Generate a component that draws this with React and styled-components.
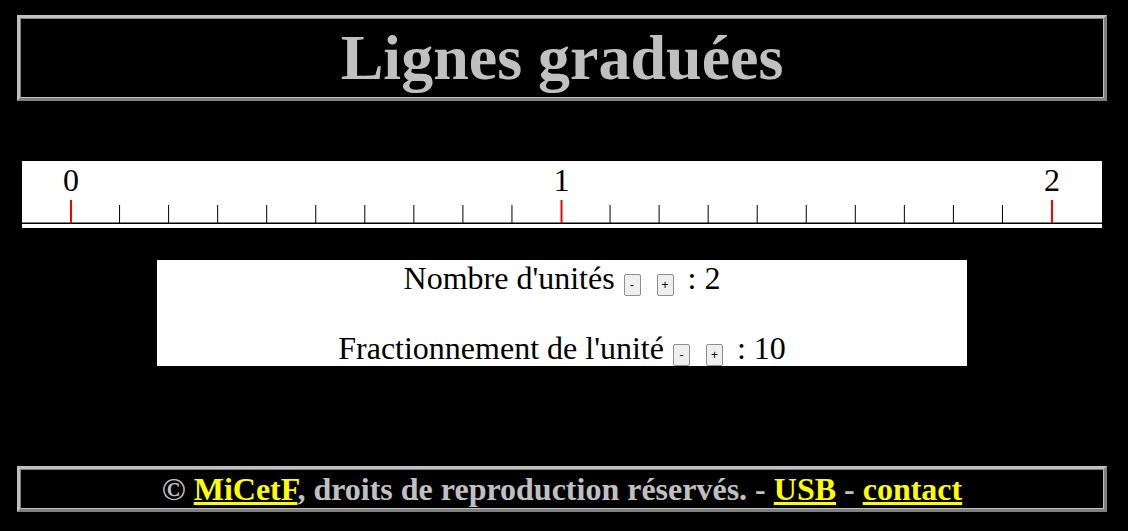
import React, { useState } from 'react';
import styled, { createGlobalStyle } from 'styled-components';

const GlobalStyle = createGlobalStyle`
  body {
    margin: 0;
    background-color: #000;
    font-family: "Liberation Serif", "Times New Roman", serif;
  }
`;

const Page = styled.div`
  width: 1124px;
  display: flex;
  flex-direction: column;
  align-items: center;
  padding-top: 15px;
`;

// cadre en relief : bord extérieur saillant, bord intérieur en creux
const Frame = styled.div`
  width: 1090px;
  box-sizing: border-box;
  border: 3px solid;
  border-color: #c0c0c0 #808080 #808080 #c0c0c0;
  background-color: #000;
`;

const FrameInner = styled.div`
  border: 1px solid;
  border-color: #808080 #c0c0c0 #c0c0c0 #808080;
  height: ${(props) => props.h}px;
  display: flex;
  align-items: center;
  justify-content: center;
`;

const Titre = styled.h1`
  margin: 0;
  font-size: 64px;
  font-weight: bold;
  color: #c0c0c0;
  line-height: 1;
`;

const Regle = styled.div`
  margin-top: 60px;
  width: 1080px;
  height: 67px;
  background-color: #fff;

  svg {
    display: block;
  }
`;

const Reglages = styled.div`
  margin-top: 32px;
  width: 810px;
  background-color: #fff;
  color: #000;
  font-size: 32px;
  text-align: center;
`;

const Ligne = styled.div`
  line-height: 36px;
  height: 36px;
  & + & {
    margin-top: 34px;
  }
`;

const Bouton = styled.button`
  width: 17px;
  height: 22px;
  padding: 0;
  margin: 0 ${(props) => props.mr || 0}px 0 ${(props) => props.ml || 0}px;
  font-family: Arial, "Liberation Sans", sans-serif;
  font-size: 12px;
  line-height: 20px;
  color: #000;
  background-color: #efefef;
  border: 1px solid #8f8f8f;
  border-radius: 2px;
  vertical-align: baseline;
  cursor: pointer;
`;

const PiedDePage = styled.div`
  margin-top: 100px;
`;

const Copyright = styled.div`
  font-size: 32px;
  font-weight: bold;
  color: #c0c0c0;
  line-height: 38px;

  a {
    color: #ffff00;
    text-decoration: underline;
  }
`;

const X0 = 48;
const LARGEUR = 1080;

const LigneGraduee = ({ unites, fraction }) => {
  const pasUnite = 490.5;
  const pas = pasUnite / fraction;
  const traits = [];
  for (let k = -1; k < unites * fraction; k++) {
    const x = X0 + k * pas;
    if (k >= 0 && k % fraction === 0) continue;
    traits.push(<rect key={k} x={x} y={44} width={1} height={18} fill="#000" />);
  }
  const grands = [];
  for (let u = 0; u <= unites; u++) {
    const x = X0 + u * pasUnite;
    grands.push(
      <g key={'u' + u}>
        <rect x={x} y={39} width={2} height={23} fill="#ff0000" />
        <text
          x={x + 1}
          y={30}
          textAnchor="middle"
          fontFamily='"Liberation Serif", serif'
          fontSize="32"
          fill="#000"
        >
          {u}
        </text>
      </g>
    );
  }
  return (
    <svg width={LARGEUR} height={67} viewBox={`0 0 ${LARGEUR} 67`}>
      <rect x={0} y={61.5} width={LARGEUR} height={1.5} fill="#000" />
      {traits}
      {grands}
    </svg>
  );
};

const App = () => {
  const [unites, setUnites] = useState(2);
  const [fraction, setFraction] = useState(10);

  return (
    <Page>
      <GlobalStyle />
      <Frame>
        <FrameInner h={78}>
          <Titre>Lignes graduées</Titre>
        </FrameInner>
      </Frame>

      <Regle>
        <LigneGraduee unites={unites} fraction={fraction} />
      </Regle>

      <Reglages>
        <Ligne>
          Nombre d'unités
          <Bouton ml={9} onClick={() => setUnites(Math.max(1, unites - 1))}>-</Bouton>
          <Bouton ml={16} mr={14} onClick={() => setUnites(unites + 1)}>+</Bouton>
          : {unites}
        </Ligne>
        <Ligne>
          Fractionnement de l'unité
          <Bouton ml={9} onClick={() => setFraction(Math.max(1, fraction - 1))}>-</Bouton>
          <Bouton ml={16} mr={14} onClick={() => setFraction(fraction + 1)}>+</Bouton>
          : {fraction}
        </Ligne>
      </Reglages>

      <PiedDePage>
        <Frame>
          <FrameInner h={38}>
            <Copyright>
              © <a href="#">MiCetF</a>, droits de reproduction réservés. - <a href="#">USB</a> - <a href="#">contact</a>
            </Copyright>
          </FrameInner>
        </Frame>
      </PiedDePage>
    </Page>
  );
};

export default App;
